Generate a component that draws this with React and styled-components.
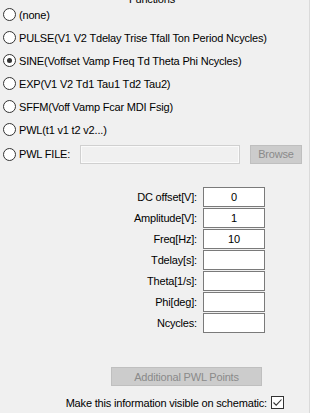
import React from 'react'
import styled, { createGlobalStyle } from 'styled-components'

const Global = createGlobalStyle`
  html, body {
    margin: 0;
    padding: 0;
    background: #f0f0f0;
  }
  body {
    font-family: "Liberation Sans", Arial, sans-serif;
    font-size: 11px;
    letter-spacing: -0.18px;
    color: #000;
  }
`

const Panel = styled.div`
  position: relative;
  width: 310px;
  height: 413px;
  box-sizing: border-box;
  overflow: hidden;
  border-right: 1px solid #dadada;
  background: #f0f0f0;
`

const Legend = styled.div`
  text-align: center;
  width: 304px;
  height: 3px;
  line-height: 13px;
  position: relative;
  top: -7px;
  white-space: nowrap;
`

const RadioList = styled.div`
  display: flex;
  flex-direction: column;
  padding: 0 0 0 3px;
`

const RadioRow = styled.div`
  display: flex;
  align-items: center;
  height: ${p => p.$h || 23}px;
  white-space: nowrap;
`

const Radio = styled.span`
  width: 11px;
  height: 11px;
  border: 1px solid #333;
  border-radius: 50%;
  background: #fff;
  flex: none;
  display: flex;
  align-items: center;
  justify-content: center;
  margin-right: 3px;
  &::after {
    content: "";
    width: 5px;
    height: 5px;
    border-radius: 50%;
    background: ${p => (p.$checked ? '#333' : 'transparent')};
  }
`

const RowLabel = styled.span`
  flex: none;
  width: ${p => p.$w}px;
`

const FileBox = styled.div`
  flex: none;
  box-sizing: border-box;
  width: 160px;
  height: 19px;
  border: 1px solid #d0d0d0;
  background: #f0f0f0;
  box-shadow: inset 0 0 0 1px #fafafa;
`

const DisabledButton = styled.div`
  flex: none;
  box-sizing: border-box;
  height: ${p => p.$h || 19}px;
  width: ${p => p.$w}px;
  margin-left: ${p => p.$ml || 0}px;
  border: 1px solid #bfbfbf;
  background: #cccccc;
  color: #8a8a8a;
  display: flex;
  align-items: center;
  justify-content: center;
`

const Params = styled.div`
  display: grid;
  grid-template-columns: 197px 62px;
  column-gap: 6px;
  row-gap: 1px;
  margin-top: 20px;
`

const Label = styled.div`
  text-align: right;
  align-self: center;
  white-space: nowrap;
`

const Field = styled.div`
  box-sizing: border-box;
  height: 20px;
  border: 1px solid #7a7a7a;
  background: #fff;
  display: flex;
  align-items: center;
  justify-content: center;
`

const Footer = styled.div`
  display: flex;
  flex-direction: column;
  margin-top: 34px;
`

const CheckRow = styled.div`
  display: flex;
  justify-content: flex-end;
  align-items: center;
  gap: 4px;
  width: 284px;
  margin-top: 10px;
  white-space: nowrap;
`

const CheckBox = styled.span`
  box-sizing: border-box;
  flex: none;
  width: 13px;
  height: 13px;
  border: 1px solid #333;
  background: #fff;
  display: flex;
  align-items: center;
  justify-content: center;
`

const functions = [
  { label: '(none)' },
  { label: 'PULSE(V1 V2 Tdelay Trise Tfall Ton Period Ncycles)' },
  { label: 'SINE(Voffset Vamp Freq Td Theta Phi Ncycles)', checked: true },
  { label: 'EXP(V1 V2 Td1 Tau1 Td2 Tau2)' },
  { label: 'SFFM(Voff Vamp Fcar MDI Fsig)' },
  { label: 'PWL(t1 v1 t2 v2...)' },
]

const params = [
  ['DC offset[V]:', '0'],
  ['Amplitude[V]:', '1'],
  ['Freq[Hz]:', '10'],
  ['Tdelay[s]:', ''],
  ['Theta[1/s]:', ''],
  ['Phi[deg]:', ''],
  ['Ncycles:', ''],
]

export default function App() {
  return (
    <>
      <Global />
      <Panel>
        <Legend>Functions</Legend>
        <RadioList>
          {functions.map(f => (
            <RadioRow key={f.label}>
              <Radio $checked={f.checked} />
              {f.label}
            </RadioRow>
          ))}
          <RadioRow $h={26}>
            <Radio />
            <RowLabel $w={61}>PWL FILE:</RowLabel>
            <FileBox />
            <DisabledButton $w={52} $ml={10}>Browse</DisabledButton>
          </RadioRow>
        </RadioList>
        <Params>
          {params.map(([l, v]) => (
            <React.Fragment key={l}>
              <Label>{l}</Label>
              <Field>{v}</Field>
            </React.Fragment>
          ))}
        </Params>
        <Footer>
          <DisabledButton $w={151} $ml={111}>Additional PWL Points</DisabledButton>
          <CheckRow>
            Make this information visible on schematic:
            <CheckBox>
              <svg width="11" height="11" viewBox="0 0 11 11">
                <path d="M1.5 5.5 L4.2 8.2 L9.5 2.5" fill="none" stroke="#333" strokeWidth="1.1" />
              </svg>
            </CheckBox>
          </CheckRow>
        </Footer>
      </Panel>
    </>
  )
}
